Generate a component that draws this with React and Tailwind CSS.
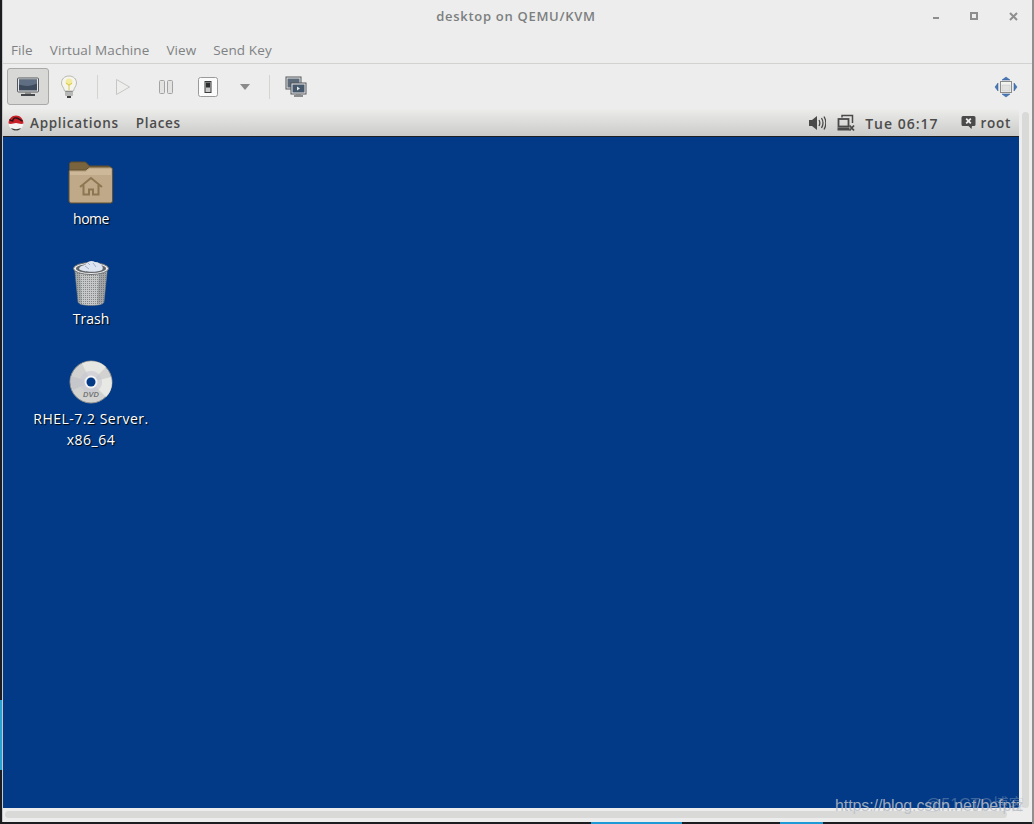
const sans = "font-['Open_Sans','Noto_Sans',sans-serif]";

function MonitorIcon() {
  return (
    <svg width="24" height="22" viewBox="0 0 24 22">
      <rect x="1.500" y="2" width="21" height="14" rx="1" fill="#e8e8e8" stroke="#55585c" />
      <rect x="3" y="3.500" width="18" height="11" fill="#3c4a5c" />
      <path d="M3 3.500h18v4c-6 3-12 3-18 1z" fill="#5f6e82" />
      <rect x="9" y="16" width="6" height="2" fill="#8a8c8e" />
      <rect x="5" y="18" width="14" height="2" fill="#45484b" />
    </svg>
  );
}

function BulbIcon() {
  return (
    <svg width="18" height="24" viewBox="0 0 18 24">
      <path d="M9 1C4.500 1 1.500 4 1.500 8c0 3.200 2.500 4.600 3 8h9c.5-3.400 3-4.800 3-8 0-4-3-7-7.500-7z" fill="#f5f5ee" stroke="#b8b9b4" />
      <circle cx="9" cy="7" r="3.500" fill="#f3ea8b" opacity="0.8" />
      <path d="M6 8l3 2 3-2M9 10v5" fill="none" stroke="#d8c84e" />
      <rect x="5" y="16" width="8" height="5" rx="1" fill="#8b8d8a" />
      <path d="M5 18h8M5 20h8" stroke="#e3e3e0" />
      <rect x="7" y="21" width="4" height="2" fill="#3d3f40" />
    </svg>
  );
}

function PlayIcon() {
  return (
    <svg width="16" height="18" viewBox="0 0 16 18">
      <path d="M1.500 1.500L14.500 9L1.500 16.500z" fill="#eeeeec" stroke="#c6c7c4" />
    </svg>
  );
}

function PauseIcon() {
  return (
    <svg width="14" height="14" viewBox="0 0 14 14">
      <rect x="0.500" y="0.500" width="5" height="13" rx="1" fill="#e3e3e1" stroke="#a2a3a2" />
      <rect x="8.500" y="0.500" width="5" height="13" rx="1" fill="#e3e3e1" stroke="#a2a3a2" />
    </svg>
  );
}

function PowerIcon() {
  return (
    <svg width="20" height="20" viewBox="0 0 20 20">
      <rect x="0.500" y="0.500" width="19" height="19" rx="2" fill="#fbfbfb" stroke="#9a9b99" />
      <rect x="7" y="4.500" width="6" height="11" fill="#c9cac8" stroke="#3a3b3c" />
      <rect x="8" y="5.500" width="4" height="5" fill="#2c2d2e" />
    </svg>
  );
}

function ConsolesIcon() {
  return (
    <svg width="22" height="22" viewBox="0 0 22 22">
      <rect x="1" y="1" width="15" height="12" fill="#e4e5e5" stroke="#53565a" />
      <rect x="2.500" y="2.500" width="12" height="9" fill="#5d6a7a" />
      <rect x="6" y="7" width="15" height="11" fill="#ececec" stroke="#53565a" />
      <rect x="7.500" y="8.500" width="12" height="8" fill="#46586c" />
      <path d="M12 10.500l3 2-3 2z" fill="#e8e8e8" />
      <rect x="11" y="18" width="5" height="1" fill="#8a8c8e" />
      <rect x="9" y="19" width="9" height="2" fill="#8a8c8e" />
    </svg>
  );
}

function ResizeIcon() {
  return (
    <svg width="24" height="22" viewBox="0 0 24 22">
      <path d="M12 1l4 3H8zM12 21l-4-3h8zM1 11l3-4v8zM23 11l-3 4V7z" fill="#4b78b4" stroke="#2f5c9c" strokeWidth="0.500" />
      <rect x="6.500" y="5.500" width="11" height="11" fill="#f2f2f0" stroke="#8b8c8a" />
      <rect x="8" y="9" width="8" height="6" fill="#e2e2e0" stroke="#c2c3c1" strokeWidth="0.500" />
    </svg>
  );
}

function RedHatIcon() {
  return (
    <svg width="16" height="16" viewBox="0 0 16 16">
      <circle cx="8" cy="8" r="7.500" fill="#f4f4f2" />
      <path d="M.5 8.500C.5 4 3.800.5 8 .5s7.500 3.500 7.500 8c-3 1.200-5-.6-7.500-.6-2.200 0-4.800 1.800-7.500.6z" fill="#c9202a" />
      <path d="M1.500 4.500c1 1 2 1.500 3.200 1.500C5 3.500 6.500 2.500 8.500 3c2.500.5 4 2.500 6 3" fill="none" stroke="#2a1414" strokeWidth="1.300" />
      <path d="M3 13c3 1.500 7 1.500 10 0-1 2-3 2.500-5 2.500S4 15 3 13z" fill="#3e3e3e" />
    </svg>
  );
}

function SpeakerIcon() {
  return (
    <svg width="17" height="16" viewBox="0 0 17 16">
      <path d="M0 5h3l5-4v14l-5-4H0z" fill="#4a4a4a" />
      <path d="M10 5c1 1.800 1 4.200 0 6M12.500 3c1.800 3 1.800 7 0 10M15 1.500c2.300 4 2.300 9 0 13" fill="none" stroke="#4a4a4a" strokeWidth="1.300" />
    </svg>
  );
}

function NetworkOffIcon() {
  return (
    <svg width="18" height="18" viewBox="0 0 18 18">
      <path d="M5 3.500V1.500h10.500V9" fill="none" stroke="#4a4a4a" strokeWidth="1.500" />
      <rect x="1.500" y="5" width="10" height="7.500" fill="none" stroke="#4a4a4a" strokeWidth="1.800" />
      <rect x="0.500" y="13.500" width="12" height="3" fill="#4a4a4a" />
      <path d="M12.500 11.500l4.500 5M17 11.500l-4.500 5" stroke="#4a4a4a" strokeWidth="1.800" />
    </svg>
  );
}

function ChatIcon() {
  return (
    <svg width="15" height="15" viewBox="0 0 15 15">
      <path d="M2 1h11a1.500 1.500 0 0 1 1.500 1.500v7A1.500 1.500 0 0 1 13 11h-2l-.5 3-3-3H2A1.500 1.500 0 0 1 .5 9.500v-7A1.500 1.500 0 0 1 2 1z" fill="#4a4a4a" />
      <path d="M5.200 3.700l4.600 4.600M9.800 3.700L5.200 8.300" stroke="#ededeb" strokeWidth="1.800" />
    </svg>
  );
}

function FolderIcon() {
  return (
    <svg width="46" height="44" viewBox="0 0 46 44" className="mb-[1px]">
      <path d="M1.500 4a2 2 0 0 1 2-2h14l4 4h19a2 2 0 0 1 2 2V22H1.500z" fill="#7a643e" stroke="#5e4c2c" />
      <path d="M1 11.500c0-1 .7-1.500 1.500-1.500h15l4-3h20c1.500 0 3 1 3 2.500V41a2 2 0 0 1-2 2H3a2 2 0 0 1-2-2z" fill="#bfa988" stroke="#62502f" />
      <path d="M2 12h15.500l4-3H43v6H2z" fill="#cdb99a" />
      <path d="M12 27L23 18l11 9M15.500 25v9.500h5.500v-5h4v5h5.500V25" fill="none" stroke="#8d7752" strokeWidth="2" />
    </svg>
  );
}

function TrashIcon() {
  return (
    <svg width="40" height="48" viewBox="0 0 40 48" className="-mb-[2px]">
      <defs>
        <pattern id="mesh" width="2" height="2" patternUnits="userSpaceOnUse">
          <rect width="2" height="2" fill="#c6c8c8" />
          <rect width="1" height="1" fill="#84888a" />
        </pattern>
      </defs>
      <path d="M3.500 9L7 43c.5 2.500 6 3.500 13 3.500s12.500-1 13-3.500l3.500-34z" fill="url(#mesh)" stroke="#77797a" strokeWidth="0.500" />
      <path d="M28 12L26 45c3-.5 6-1 7-2l3-33z" fill="#5e6264" opacity="0.35" />
      <path d="M3.500 9L7 43c.5 1 2 1.500 4 2L9 12z" fill="#5e6264" opacity="0.3" />
      <ellipse cx="20" cy="9.500" rx="17.500" ry="6" fill="#ecedee" stroke="#6d6f70" />
      <ellipse cx="20" cy="9.500" rx="15" ry="4.500" fill="#62666a" />
      <path d="M8 10c1-4 5-3 7-5 2-3 6-4 9-2 3 0 6 2 7 4 1 1 1 3 0 4-4 2.500-19 2.500-23-1z" fill="#dde5f2" />
      <path d="M14 7l4 3M22 4l3 4M17 4l2 2" stroke="#9fb0cb" />
    </svg>
  );
}

function DvdIcon() {
  return (
    <svg width="44" height="44" viewBox="0 0 44 44" className="mb-[1px]">
      <circle cx="22" cy="22" r="21" fill="#d2d3d1" stroke="#8f908f" />
      <path d="M22 22L13 3.500A21 21 0 0 1 37 7z" fill="#e6e6e2" />
      <path d="M22 22L42 17A21 21 0 0 1 37 37z" fill="#e8e8e4" />
      <path d="M22 22L4 30A21 21 0 0 1 2 16z" fill="#c6c7ca" />
      <circle cx="22" cy="22" r="11" fill="#c7c6d2" opacity="0.6" />
      <circle cx="22" cy="22" r="6.500" fill="#f2f2f2" />
      <circle cx="22" cy="22" r="4.500" fill="#023a87" />
      <text x="22" y="37" textAnchor="middle" fontSize="7.500" fontStyle="italic" fontWeight="700" fill="#777" fontFamily="Liberation Sans, sans-serif">DVD</text>
    </svg>
  );
}

function DesktopItem({ icon, className, children }) {
  return (
    <div className="flex h-[100px] w-[140px] flex-col items-center">
      <div className="flex h-[56px] items-end pb-[3px]">{icon}</div>
      <div className={`text-center text-[14px] leading-[21px] text-white [text-shadow:1px_1px_1px_#000] ${className}`}>
        {children}
      </div>
    </div>
  );
}

function ToolDivider() {
  return <div className="h-[24px] w-px bg-[#d4d4d2]" />;
}

export default function App() {
  return (
    <div className={`relative flex h-[824px] w-[1034px] items-start overflow-hidden bg-[#1b1d20] ${sans}`}>
      <div className="w-[2px] shrink-0" />
      <div className="flex h-[822px] min-w-0 flex-1 flex-col border-l border-[#c8c8c6] bg-[#ededed]">
        <div className="relative flex h-[40px] shrink-0 justify-center pt-[6px]">
          <span className="mr-[3px] text-[13px] font-semibold leading-[20px] tracking-[0.7px] text-[#7c7f80]">desktop on QEMU/KVM</span>
          <div className="absolute right-[14px] top-[12px] flex items-start gap-[31px]">
            <div className="mt-[5px] h-[2px] w-[6px] bg-[#8e8e8e]" />
            <div className="size-[8px] border-2 border-[#8e8e8e]" />
            <svg width="9" height="9" viewBox="0 0 9 9">
              <path d="M1 1l7 7M8 1L1 8" stroke="#8e8e8e" strokeWidth="2" />
            </svg>
          </div>
        </div>

        <div className="flex h-[24px] shrink-0 items-start gap-[17px] border-b border-[#d2d2d0] pl-[8px] text-[13.500px] leading-[20px] tracking-[0.1px] text-[#7f8283]">
          <span>File</span>
          <span>Virtual Machine</span>
          <span>View</span>
          <span>Send Key</span>
        </div>

        <div className="flex h-[45px] shrink-0 items-center pl-[4px] pr-[14px]">
          <div className="flex h-[37px] w-[42px] items-center justify-center rounded-[3px] border border-[#a9a9a7] bg-[#d8d8d6]">
            <MonitorIcon />
          </div>
          <div className="ml-[9px] flex w-[22px] justify-center"><BulbIcon /></div>
          <div className="ml-[17px]"><ToolDivider /></div>
          <div className="ml-[16px] flex w-[18px] justify-center"><PlayIcon /></div>
          <div className="ml-[25px] flex w-[18px] justify-center"><PauseIcon /></div>
          <div className="ml-[23px]"><PowerIcon /></div>
          <div className="ml-[22px] h-0 w-0 border-x-[5px] border-t-[6px] border-x-transparent border-t-[#8a8a8a]" />
          <div className="ml-[19px]"><ToolDivider /></div>
          <div className="ml-[15px]"><ConsolesIcon /></div>
          <div className="ml-auto"><ResizeIcon /></div>
        </div>

        <div className="flex min-h-0 flex-1">
          <div className="flex min-w-0 flex-1 flex-col">
            <div className="flex h-[28px] shrink-0 items-center border-b border-[#1d1f22] bg-gradient-to-b from-[#ececea] to-[#cbcbc9] pl-[5px] pr-[8px] text-[13.500px] font-semibold tracking-[0.7px] text-[#4c4c4c]">
              <RedHatIcon />
              <span className="ml-[6px] mt-[2px]">Applications</span>
              <span className="ml-[17px] mt-[2px]">Places</span>
              <div className="ml-auto flex items-center">
                <SpeakerIcon />
                <div className="ml-[12px] -translate-x-px"><NetworkOffIcon /></div>
                <span className="ml-[9px] mt-[2px] text-[14px] tracking-[1px]">Tue 06:17</span>
                <div className="ml-[22px]"><ChatIcon /></div>
                <span className="ml-[5px] mt-[2px]">root</span>
              </div>
            </div>
            <div className="flex min-h-0 flex-1 flex-col items-start bg-[#023a87] pl-[18px] pt-[15px]">
              <DesktopItem icon={<FolderIcon />} className="tracking-[-0.5px]">home</DesktopItem>
              <DesktopItem icon={<TrashIcon />}>Trash</DesktopItem>
              <DesktopItem icon={<DvdIcon />} className="tracking-[0.5px]">
                RHEL-7.2 Server.
                <br />
                x86_64
              </DesktopItem>
            </div>
            <div className="h-[14px] shrink-0 pl-[2px] pr-[12px] pt-[3px]">
              <div className="h-[7px] w-full rounded-full bg-[#d9dad8]" />
            </div>
          </div>
          <div className="w-[13px] shrink-0 pl-[3px] pt-[3px] pb-[14px]">
            <div className="h-full w-[7px] rounded-full bg-[#d9dad8]" />
          </div>
        </div>
      </div>
      <div className="h-[824px] w-[2px] shrink-0 bg-[#8f8f8f]" />

      {/* desktop behind the window, showing at the edges */}
      <div className="absolute left-0 top-[700px] h-[70px] w-[2px] bg-[#2a9fd0]" />
      <div className="absolute bottom-0 left-[591px] h-[2px] w-[91px] bg-[#1e9bd6]" />
      <div className="absolute bottom-0 left-[780px] h-[2px] w-[43px] bg-[#1e9bd6]" />

      {/* blog watermarks */}
      <div className="absolute bottom-[9px] left-[835px] font-['Liberation_Sans',sans-serif] text-[16px] leading-[18px] tracking-[-0.1px] text-[#b9bec6]/85">
        https://blog.csdn.net/befptz
      </div>
      <div className="absolute bottom-[10px] left-[925px] font-['Liberation_Sans','Noto_Sans_CJK_SC',sans-serif] text-[16px] leading-[18px] text-[#b9bec6]/35">
        @51CTO博客
      </div>
    </div>
  );
}
